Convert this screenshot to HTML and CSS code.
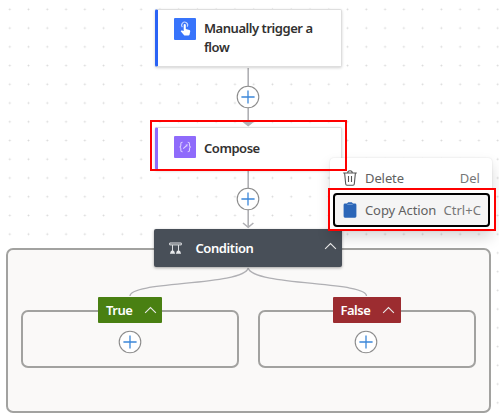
FILE: index.html
```html
<!DOCTYPE html>
<html lang="en">
<head>
<meta charset="utf-8">
<title>Flow designer</title>
<link rel="stylesheet" href="styles.css">
</head>
<body>
<svg class="defs" aria-hidden="true">
  <symbol id="plus" viewBox="0 0 24 24"><circle cx="12" cy="12" r="10.8" fill="#fff" stroke="#8c8c8c" stroke-width="1.1"/><path d="M12 5.400v13.200M5.400 12h13.200" stroke="#3b87d9" stroke-width="1.300" fill="none"/></symbol>
  <symbol id="chevron" viewBox="0 0 14 8"><path d="M1.200 7 7 1.300 12.800 7" fill="none" stroke="currentColor" stroke-width="1.200"/></symbol>
</svg>
<main class="canvas">
  <section class="group scope"></section>
  <section class="group branch branch-true"></section>
  <section class="group branch branch-false"></section>
  <svg class="edges" viewBox="0 0 499 416">
    <g fill="none" stroke="#b0b0b4" stroke-width="1.600">
      <path d="M248.200 68V124M248.200 171V227"/>
      <path d="M243 223l5.200 4.300 5.200-4.300"/>
      <path d="M248.200 268C244 286 130 281 130 296M248.200 268C252.400 286 366.500 281 366.500 296" stroke-width="1.300"/>
    </g>
    <path d="M242.500 122h11.400l-5.700 4.500z" fill="#b0b0b4"/>
  </svg>
  <svg class="add add-1"><use href="#plus"/></svg>
  <svg class="add add-2"><use href="#plus"/></svg>
  <svg class="add add-3"><use href="#plus"/></svg>
  <svg class="add add-4"><use href="#plus"/></svg>

  <article class="card trigger">
    <svg class="icon" viewBox="0 0 22 22"><rect width="22" height="22" rx="1" fill="#3874fb"/><path d="M8.400 9.100a3 3 0 1 1 4.800-.4" fill="none" stroke="#c6d8ff" stroke-width="1.100"/><path d="M9.700 7a1.050 1.050 0 0 1 2.100 0v4.100l3.600.9q1 .3.800 1.400l-.7 3.400q-.2.700-1 .7h-3.600q-.6 0-1-.5l-3.200-3.700.6-.7q.4-.3.900-.1l1.500.5z" fill="#fff"/></svg>
    <h2 class="title">Manually trigger a flow</h2>
  </article>
  <article class="card compose">
    <svg class="icon" viewBox="0 0 22 22"><rect width="22" height="22" rx="1" fill="#8f6bfb"/><path d="M8.600 6.300q-1.800-.1-1.800 1.600v1.500q0 1.400-1.300 1.600 1.300.2 1.300 1.600v1.500q0 1.700 1.800 1.600M13.700 6.300q1.800-.1 1.800 1.600v1.500q0 1.400 1.300 1.600-1.300.2-1.300 1.600v1.500q0 1.700-1.800 1.600M9.200 12.700l3.500-3.200" fill="none" stroke="#dccfff" stroke-width="1.100"/><path d="M11.400 8.800l2.400-.6-.7 2.500z" fill="#dccfff"/></svg>
    <h2 class="title">Compose</h2>
  </article>
  <article class="condition">
    <svg class="scales" viewBox="0 0 13 13"><path d="M.7 1h11.600M.7 2.900h11.600M.7 1v1.900M12.300 1v1.900M3.500 3v6.500M9.500 3v6.500" fill="none" stroke="#dfe1e4"/><path d="M2 8.800h3l1.100 3H.9zM8 8.800h3l1.100 3H6.900z" fill="#e8eaec"/></svg>
    <h2 class="name">Condition</h2>
    <svg class="chevron"><use href="#chevron"/></svg>
  </article>
  <div class="tag tag-true"><span>True</span><svg class="chevron"><use href="#chevron"/></svg></div>
  <div class="tag tag-false"><span>False</span><svg class="chevron"><use href="#chevron"/></svg></div>

  <div class="menu">
    <div class="item">
      <svg class="glyph" viewBox="0 0 14 16"><path d="M.2 3h13.600M4.700 3q0-2.200 2.300-2.200T9.300 3M1.600 3l1.100 11q.1 1.200 1.300 1.200h6q1.200 0 1.300-1.200l1.100-11M5.500 6v6M8.500 6v6" fill="none" stroke="#555" stroke-width="1.100"/></svg>
      <span class="label">Delete</span><span class="key">Del</span>
    </div>
    <div class="item focused">
      <svg class="glyph" viewBox="0 0 14 16"><path d="M2 1.500h2L5.200.2h3.600L10 1.500h2q1.400 0 1.400 1.400v11.400q0 1.400-1.400 1.400H2Q.6 15.700.6 14.300V2.900Q.6 1.500 2 1.500z" fill="#2b66b8"/><path d="M4.300 2.400h5.400" stroke="#83a9dc" stroke-width=".8"/></svg>
      <span class="label">Copy Action</span><span class="key">Ctrl+C</span>
    </div>
  </div>
  <div class="highlight highlight-compose"></div>
  <div class="highlight highlight-copy"></div>
</main>
</body>
</html>
```
FILE: styles.css
```css
* { box-sizing: border-box; }
body { margin: 0; background: #fff; font-family: "Noto Sans", "Open Sans", sans-serif; }
.defs { position: absolute; width: 0; height: 0; }
.canvas {
  position: relative; width: 499px; height: 416px; overflow: hidden;
  background: radial-gradient(circle, #d8d8d8 0, #dcdcdc .6px, transparent 1.300px) .4px 0 / 18.770px 18.740px;
}
h2 { margin: 0; font-size: 13px; font-weight: 600; letter-spacing: -.42px; }
.group { position: absolute; border: 2px solid #a2a2a0; border-radius: 7px; background: #faf9f8; }
.scope { left: 6px; top: 248px; width: 484.500px; height: 165px; }
.branch { top: 310px; width: 218px; height: 58px; }
.branch-true { left: 21px; }
.branch-false { left: 257.500px; }
.edges { position: absolute; left: 0; top: 0; width: 499px; height: 416px; }
.add { position: absolute; width: 24px; height: 24px; }
.add-1 { left: 236.200px; top: 85.300px; }
.add-2 { left: 236.200px; top: 187.300px; }
.add-3 { left: 118px; top: 329.600px; }
.add-4 { left: 354.400px; top: 329.600px; }

.card {
  position: absolute; left: 154.500px; width: 187.500px; display: flex; gap: 8px;
  padding: 8px 20px 0 16px; background: #fff; border: 1px solid #dedede; border-left: 3px solid #2a63f5;
  border-radius: 2px; box-shadow: 0 1px 3px rgba(0,0,0,.18);
}
.trigger { top: 9px; height: 58px; }
.compose { top: 127px; height: 43px; border-left-color: #8f6bfb; }
.icon { width: 22px; height: 22px; flex: none; }
.title { color: #323130; line-height: 19px; padding-top: 1px; margin-left: .5px; letter-spacing: -.46px; }
.compose .title { padding-top: 3px; }
.condition {
  position: absolute; left: 154px; top: 229px; width: 188px; height: 38px;
  display: flex; align-items: center; padding: 0 5px 0 15px; background: #484f58; color: #fff;
  border-radius: 2px; box-shadow: 0 1px 3px rgba(0,0,0,.35);
}
.scales { width: 13px; height: 13px; margin-right: 13.500px; }
.name { flex: 1; }
.chevron { width: 13px; height: 8px; color: #e8e8e8; flex: none; }
.condition .chevron { margin-bottom: 4px; }
.tag {
  position: absolute; top: 297px; height: 26px; display: flex; align-items: center;
  justify-content: space-between; padding: 0 5px 0 8px; color: #fff; font-size: 13px; font-weight: 600;
  letter-spacing: -.5px; border-radius: 1px;
}
.tag-true { left: 98px; width: 64px; background: #498012; }
.tag-false { left: 332.500px; width: 68px; padding-right: 6px; background: #9c2c30; }

.menu {
  position: absolute; left: 330px; top: 158px; width: 162px; height: 73px; padding: 3px;
  background: #fff; border-radius: 4px; box-shadow: 0 7px 14px rgba(0,0,0,.15), 0 0 2px rgba(0,0,0,.12);
}
.item { display: flex; align-items: center; height: 33px; padding: 0 9px 0 10px; color: #616161; font-size: 13px; letter-spacing: -.1px; }
.glyph { width: 14px; height: 16px; margin-right: 8px; flex: none; }
.label { flex: 1; white-space: nowrap; }
.key { color: #777; letter-spacing: .05px; }
.focused { width: 157px; height: 34px; margin-top: -1px; padding: 0 7px 0 8px; background: #f5f5f5; border: 2px solid #000; border-radius: 4px; }
.highlight { position: absolute; border: 2px solid #fe0000; }
.highlight-compose { left: 150px; top: 120px; width: 197px; height: 51px; }
.highlight-copy { left: 328px; top: 188px; width: 168px; height: 43px; box-shadow: inset 0 0 0 2px #fff; }
```
